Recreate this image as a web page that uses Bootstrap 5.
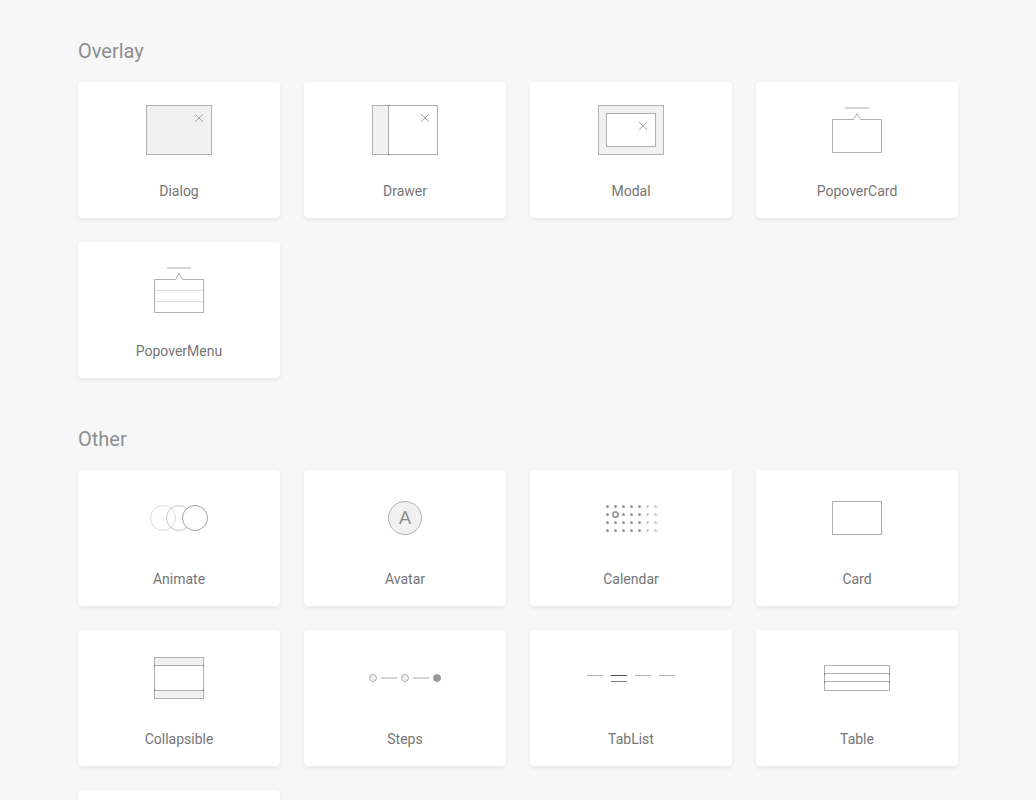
<!DOCTYPE html>
<html lang="en">
<head>
<meta charset="utf-8">
<meta name="viewport" content="width=device-width, initial-scale=1">
<title>Components</title>
<link href="https://cdn.jsdelivr.net/npm/bootstrap@5.3.0/dist/css/bootstrap.min.css" rel="stylesheet">
<style>
  body { background: #f7f7f7; color: #757575; font-family: Roboto, "Liberation Sans", sans-serif; }
  .gallery { padding: 38px 78px 48px; }
  .section-title { font-size: 20px; line-height: 26px; font-weight: 400; color: #8e8e8e; margin-bottom: 18px; }
  .tile { background: #fff; border-radius: 4px; box-shadow: 0 2px 4px rgba(0, 0, 0, .07); color: inherit; min-height: 136px; padding-bottom: 14px; }
  .tile-name { font-size: 14px; line-height: 26px; }
  .glyph { width: 96px; height: 96px; fill: none; stroke: #b0b0b0; }
  .glyph .shade { fill: #f1f1f1; }
  .glyph .paper { fill: #fff; }
  .glyph .thick { stroke: #d6d6d6; stroke-width: 2; }
  .glyph .faint { stroke: #e0e0e0; }
  .glyph .cross { stroke: #aaa; }
  .glyph .joint { stroke: #808080; }
  .glyph .dots { stroke: #999; stroke-width: 3; stroke-linecap: round; stroke-dasharray: 0 8; }
  .glyph .dots-off { stroke: #ccc; }
  .glyph text { fill: #8c8c8c; stroke: none; font-family: Lato, sans-serif; font-size: 18px; text-anchor: middle; }
</style>
</head>
<body>
<main class="container-fluid gallery">
  <section class="mb-5">
    <h2 class="section-title">Overlay</h2>
    <div class="row row-cols-2 row-cols-md-4 g-4">
      <div class="col"><a href="#dialog" class="tile d-flex flex-column align-items-center text-decoration-none">
        <svg class="glyph" viewBox="0 0 96 96" aria-hidden="true"><rect class="shade" x="15.500" y="23.500" width="65" height="49"/><path class="cross" d="M64 32l8 8M72 32l-8 8"/></svg>
        <span class="tile-name">Dialog</span></a></div>
      <div class="col"><a href="#drawer" class="tile d-flex flex-column align-items-center text-decoration-none">
        <svg class="glyph" viewBox="0 0 96 96" aria-hidden="true"><rect class="paper" x="15.500" y="23.500" width="65" height="49"/><rect class="shade" x="15.500" y="23.500" width="16" height="49"/><path class="joint" d="M31 23.500h2M31 72.500h2"/><path class="cross" d="M64 32l8 8M72 32l-8 8"/></svg>
        <span class="tile-name">Drawer</span></a></div>
      <div class="col"><a href="#modal" class="tile d-flex flex-column align-items-center text-decoration-none">
        <svg class="glyph" viewBox="0 0 96 96" aria-hidden="true"><rect class="shade" x="15.500" y="23.500" width="65" height="49"/><rect class="paper" x="23.500" y="31.500" width="49" height="33"/><path class="cross" d="M56 40l8 8M64 40l-8 8"/></svg>
        <span class="tile-name">Modal</span></a></div>
      <div class="col"><a href="#popover-card" class="tile d-flex flex-column align-items-center text-decoration-none">
        <svg class="glyph" viewBox="0 0 96 96" aria-hidden="true"><path class="thick" d="M36 26h24"/><path d="M23.500 37.500H44.500L48 31.500L51.500 37.500H72.500V70.500H23.500Z"/></svg>
        <span class="tile-name">PopoverCard</span></a></div>
      <div class="col"><a href="#popover-menu" class="tile d-flex flex-column align-items-center text-decoration-none">
        <svg class="glyph" viewBox="0 0 96 96" aria-hidden="true"><path class="thick" d="M36 26h24"/><path class="faint" d="M24 48.500h48M24 59.500h48"/><path d="M23.500 37.500H44.500L48 31.500L51.500 37.500H72.500V70.500H23.500Z"/></svg>
        <span class="tile-name">PopoverMenu</span></a></div>
    </div>
  </section>
  <section>
    <h2 class="section-title">Other</h2>
    <div class="row row-cols-2 row-cols-md-4 g-4">
      <div class="col"><a href="#animate" class="tile d-flex flex-column align-items-center text-decoration-none">
        <svg class="glyph" viewBox="0 0 96 96" aria-hidden="true"><circle cx="32" cy="48" r="12.500" stroke="#dcdcdc"/><circle cx="48" cy="48" r="12.500" stroke="#c8c8c8"/><circle class="paper" cx="64" cy="48" r="12.500" stroke="#a4a4a4"/></svg>
        <span class="tile-name">Animate</span></a></div>
      <div class="col"><a href="#avatar" class="tile d-flex flex-column align-items-center text-decoration-none">
        <svg class="glyph" viewBox="0 0 96 96" aria-hidden="true"><circle class="shade" cx="48" cy="48" r="16.500"/><text x="48" y="54">A</text></svg>
        <span class="tile-name">Avatar</span></a></div>
      <div class="col"><a href="#calendar" class="tile d-flex flex-column align-items-center text-decoration-none">
        <svg class="glyph" viewBox="0 0 96 96" aria-hidden="true"><path class="dots" d="M24.500 36.500h33M24.500 44.500h33M24.500 52.500h33M24.500 60.500h33"/><path class="dots dots-off" d="M64.500 36.500h9M64.500 44.500h9M64.500 52.500h9M64.500 60.500h9"/><circle class="paper" cx="32.500" cy="44.500" r="2.600" stroke="#999" stroke-width="1.800"/></svg>
        <span class="tile-name">Calendar</span></a></div>
      <div class="col"><a href="#card" class="tile d-flex flex-column align-items-center text-decoration-none">
        <svg class="glyph" viewBox="0 0 96 96" aria-hidden="true"><rect x="23.500" y="31.500" width="49" height="33"/></svg>
        <span class="tile-name">Card</span></a></div>
      <div class="col"><a href="#collapsible" class="tile d-flex flex-column align-items-center text-decoration-none">
        <svg class="glyph" viewBox="0 0 96 96" aria-hidden="true"><rect class="shade" x="23.500" y="27.500" width="49" height="41"/><rect class="paper" x="23.500" y="35.500" width="49" height="25"/><path class="joint" d="M23.500 35v2M72.500 35v2M23.500 59v2M72.500 59v2"/></svg>
        <span class="tile-name">Collapsible</span></a></div>
      <div class="col"><a href="#steps" class="tile d-flex flex-column align-items-center text-decoration-none">
        <svg class="glyph" viewBox="0 0 96 96" aria-hidden="true"><path class="thick" d="M24 48h16M56 48h16"/><circle class="shade" cx="16" cy="48" r="3.500"/><circle class="shade" cx="48" cy="48" r="3.500"/><circle cx="80" cy="48" r="3.500" fill="#999" stroke="#999"/></svg>
        <span class="tile-name">Steps</span></a></div>
      <div class="col"><a href="#tablist" class="tile d-flex flex-column align-items-center text-decoration-none">
        <svg class="glyph" viewBox="0 0 96 96" aria-hidden="true"><path d="M4 45.500h16M52 45.500h16M76 45.500h16"/><path stroke="#555" d="M28 45.500h16"/><path stroke="#808080" d="M28 51.500h16"/></svg>
        <span class="tile-name">TabList</span></a></div>
      <div class="col"><a href="#table" class="tile d-flex flex-column align-items-center text-decoration-none">
        <svg class="glyph" viewBox="0 0 96 96" aria-hidden="true"><path d="M15.500 35.500h65v25h-65zM16 43.500h64M16 51.500h64"/><path class="joint" d="M15.500 43v2M80.500 43v2M15.500 51v2M80.500 51v2"/></svg>
        <span class="tile-name">Table</span></a></div>
      <div class="col"><div class="tile"></div></div>
    </div>
  </section>
</main>
<script src="https://cdn.jsdelivr.net/npm/bootstrap@5.3.0/dist/js/bootstrap.bundle.min.js"></script>
</body>
</html>
